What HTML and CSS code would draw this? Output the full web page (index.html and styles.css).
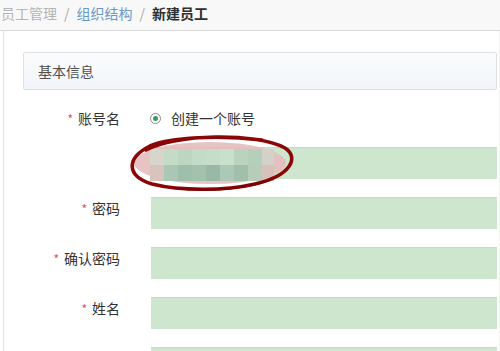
FILE: index.html
```html
<!DOCTYPE html>
<html lang="zh">
<head>
<meta charset="utf-8">
<title>新建员工</title>
<link rel="stylesheet" href="styles.css">
</head>
<body>
<div class="topbar">
  <div class="crumbs">
    <span class="crumb-muted">员工管理</span><span class="sep">/</span><span class="crumb-link">组织结构</span><span class="sep">/</span><span class="crumb-current">新建员工</span>
  </div>
</div>
<div class="main">
  <div class="panel-head">基本信息</div>
  <div class="form">
    <div class="row row-first">
      <div class="label"><span class="req">*</span>账号名</div>
      <div class="radio-line"><span class="radio"><span class="dot"></span></span><span class="radio-text">创建一个账号</span></div>
    </div>
    <div class="row row-second">
      <div class="label"></div>
      <div class="input"></div>
    </div>
    <div class="row">
      <div class="label"><span class="req">*</span>密码</div>
      <div class="input"></div>
    </div>
    <div class="row">
      <div class="label"><span class="req">*</span>确认密码</div>
      <div class="input"></div>
    </div>
    <div class="row">
      <div class="label"><span class="req">*</span>姓名</div>
      <div class="input"></div>
    </div>
    <div class="row">
      <div class="label"></div>
      <div class="input"></div>
    </div>
  </div>
</div>
<svg class="redact" width="180" height="66" viewBox="125 130 180 66" xmlns="http://www.w3.org/2000/svg">
  <ellipse cx="210" cy="163" rx="76" ry="21" fill="#e6bcbc" opacity="0.9"/>
  <rect x="150" y="149" width="14" height="16" fill="#d8d6cc"/>
  <rect x="164" y="149" width="14" height="16" fill="#c4dcc6"/>
  <rect x="178" y="149" width="14" height="16" fill="#bcd6c2"/>
  <rect x="192" y="149" width="14" height="16" fill="#c2dcc8"/>
  <rect x="206" y="149" width="14" height="16" fill="#c6ddca"/>
  <rect x="220" y="149" width="14" height="16" fill="#c9e0cc"/>
  <rect x="234" y="149" width="14" height="16" fill="#b9d3bf"/>
  <rect x="248" y="149" width="14" height="16" fill="#b4cfba"/>
  <rect x="262" y="149" width="12" height="16" fill="#d4d2c8"/>
  <rect x="150" y="165" width="14" height="16" fill="#d8c4bc"/>
  <rect x="164" y="165" width="14" height="16" fill="#a9c7b4"/>
  <rect x="178" y="165" width="14" height="16" fill="#9ebfaa"/>
  <rect x="192" y="165" width="14" height="16" fill="#a3c2ae"/>
  <rect x="206" y="165" width="14" height="16" fill="#99b9a6"/>
  <rect x="220" y="165" width="14" height="16" fill="#abc9b6"/>
  <rect x="234" y="165" width="14" height="16" fill="#a2bfab"/>
  <rect x="248" y="165" width="14" height="16" fill="#b6cdb9"/>
  <rect x="262" y="165" width="12" height="16" fill="#d6c2ba"/>
  <path d="M146 150 C 175 134, 255 132, 285 148 C 300 158, 290 176, 255 184 C 225 191, 180 191, 152 184 C 126 176, 126 158, 150 146 C 170 137, 220 135, 262 140" fill="none" stroke="#8b0606" stroke-width="3.6" stroke-linecap="round" stroke-linejoin="round"/>
  <path d="M175 188 C 205 192, 245 189, 270 180" fill="none" stroke="#7a0303" stroke-width="2.2" stroke-linecap="round"/>
</svg>
</body>
</html>
```
FILE: styles.css
```css
html, body {
  margin: 0;
  padding: 0;
}
body {
  width: 500px;
  height: 351px;
  overflow: hidden;
  position: relative;
  background: #ffffff;
  font-family: "Noto Sans CJK SC", "Noto Sans", sans-serif;
  font-size: 14px;
  color: #3c3c3c;
}
.topbar {
  height: 31px;
  background: #f8f8f8;
  border-bottom: 1px solid #d9d9d9;
  box-sizing: border-box;
}
.crumbs {
  line-height: 26px;
  padding-left: 1px;
  white-space: nowrap;
}
.crumb-muted { color: #b5b5b5; }
.crumb-link { color: #6b97c6; }
.crumb-current { color: #2f2f2f; font-weight: bold; }
.sep {
  color: #a8a8a8;
  margin: 0 7px;
}
.main {
  margin-left: 3px;
  border-left: 1px solid #e2e2e2;
  border-right: 1px solid #eef6ee;
  padding: 21px 2px 0 19px;
  height: 320px;
  box-sizing: border-box;
  overflow: hidden;
}
.panel-head {
  height: 38px;
  box-sizing: border-box;
  border: 1px solid #e0e0e0;
  border-radius: 2px;
  background: linear-gradient(#fbfcfd, #f1f5fa);
  padding-left: 14px;
  line-height: 36px;
  color: #505050;
}
.row {
  display: flex;
  align-items: flex-start;
  margin-top: 18px;
  height: 32px;
}
.row-first {
  margin-top: 12px;
  align-items: center;
}
.row-second {
  margin-top: 13px;
}
.label {
  width: 97px;
  flex: none;
  text-align: right;
  line-height: 20px;
  padding-top: 1px;
  color: #333333;
}
.row-first .label {
  padding-top: 0;
}
.req {
  color: #d9534f;
  margin-right: 5px;
  font-size: 12px;
}
.input {
  margin-left: 31px;
  flex: 1;
  height: 32px;
  box-sizing: border-box;
  background: #cde6cd;
  border-top: 1px solid #c4dbc4;
}
.radio-line {
  margin-left: 30px;
  display: flex;
  align-items: center;
}
.radio {
  width: 11px;
  height: 11px;
  border: 1px solid #8a8a8a;
  border-radius: 50%;
  box-sizing: border-box;
  display: flex;
  align-items: center;
  justify-content: center;
  background: #fff;
}
.dot {
  width: 5px;
  height: 5px;
  border-radius: 50%;
  background: #3a9a5a;
}
.radio-text {
  margin-left: 10px;
  color: #333333;
}
.redact {
  position: absolute;
  left: 125px;
  top: 130px;
}
```
